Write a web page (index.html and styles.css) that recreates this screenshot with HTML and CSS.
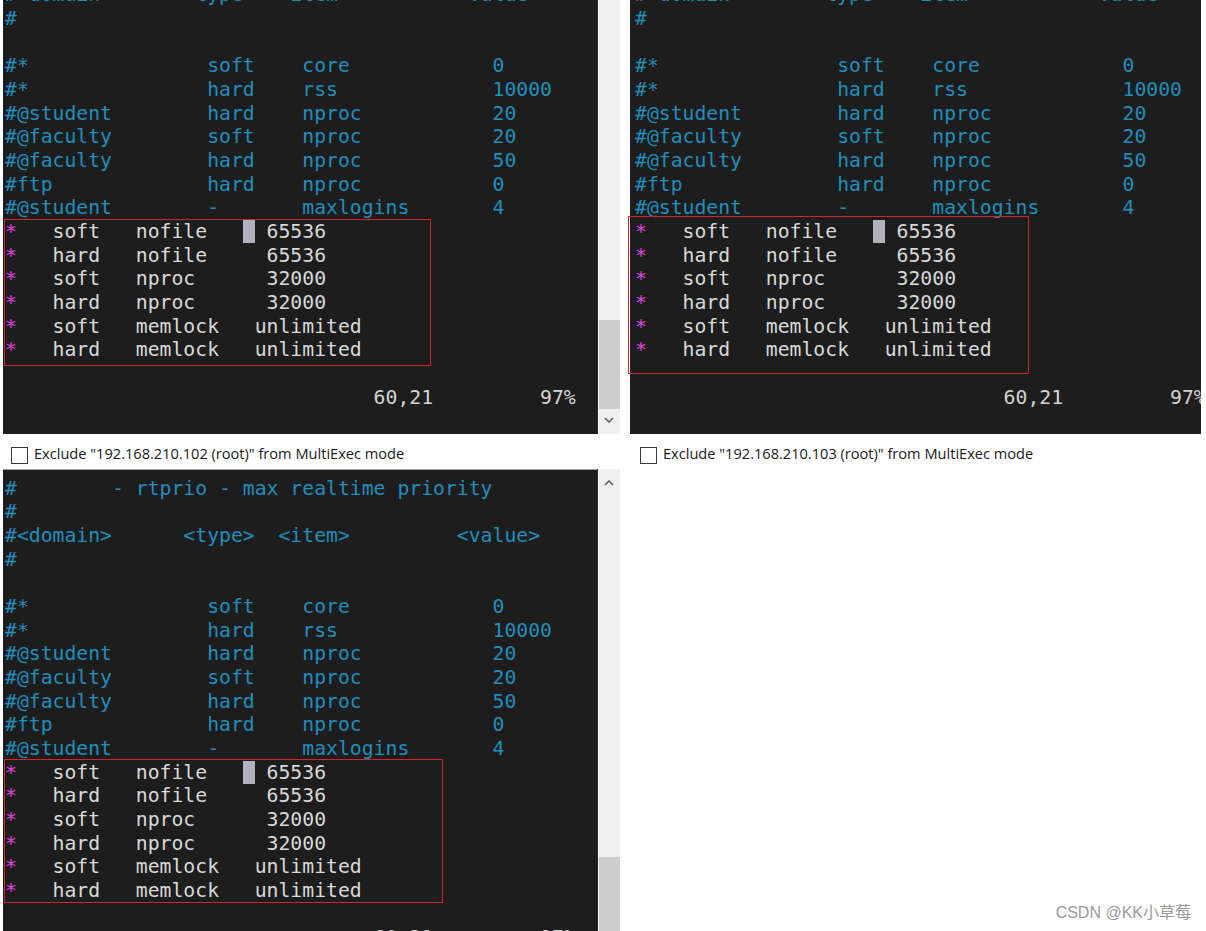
FILE: index.html
```html
<!DOCTYPE html>
<html lang="zh">
<head>
<meta charset="utf-8">
<title>MultiExec</title>
<link rel="stylesheet" href="styles.css">
</head>
<body>
<div class="screen">
  <div class="pane">
    <div class="term term-top">
<pre class="text"><span class="c">#&lt;domain&gt;      &lt;type&gt;  &lt;item&gt;         &lt;value&gt;</span>
<span class="c">#</span>

<span class="c">#*               soft    core            0</span>
<span class="c">#*               hard    rss             10000</span>
<span class="c">#@student        hard    nproc           20</span>
<span class="c">#@faculty        soft    nproc           20</span>
<span class="c">#@faculty        hard    nproc           50</span>
<span class="c">#ftp             hard    nproc           0</span>
<span class="c">#@student        -       maxlogins       4</span>
<span class="m">*</span>   soft   nofile   <span class="cur"> </span> 65536
<span class="m">*</span>   hard   nofile     65536
<span class="m">*</span>   soft   nproc      32000
<span class="m">*</span>   hard   nproc      32000
<span class="m">*</span>   soft   memlock   unlimited
<span class="m">*</span>   hard   memlock   unlimited

<span class="s">                               60,21         97%</span>
</pre>
      <div class="mark mark-tl"></div>
    </div>
    <div class="scrollbar">
      <div class="track track-top"></div>
      <div class="thumb thumb-top"></div>
      <div class="track track-gap"></div>
      <div class="arrow"><svg width="10" height="6" viewBox="0 0 10 6"><path d="M1 1 L5 5 L9 1" fill="none" stroke="#606060" stroke-width="1.6"/></svg></div>
    </div>
  </div>

  <div class="pane pane-right">
    <div class="term term-top term-r">
<pre class="text"><span class="c">#&lt;domain&gt;      &lt;type&gt;  &lt;item&gt;         &lt;value&gt;</span>
<span class="c">#</span>

<span class="c">#*               soft    core            0</span>
<span class="c">#*               hard    rss             10000</span>
<span class="c">#@student        hard    nproc           20</span>
<span class="c">#@faculty        soft    nproc           20</span>
<span class="c">#@faculty        hard    nproc           50</span>
<span class="c">#ftp             hard    nproc           0</span>
<span class="c">#@student        -       maxlogins       4</span>
<span class="m">*</span>   soft   nofile   <span class="cur"> </span> 65536
<span class="m">*</span>   hard   nofile     65536
<span class="m">*</span>   soft   nproc      32000
<span class="m">*</span>   hard   nproc      32000
<span class="m">*</span>   soft   memlock   unlimited
<span class="m">*</span>   hard   memlock   unlimited

<span class="s">                               60,21         97%</span>
</pre>
    </div>
    <div class="mark mark-tr"></div>
  </div>

  <div class="label label-l">
    <span class="box"></span>
    <span class="label-text">Exclude "192.168.210.102 (root)" from MultiExec mode</span>
  </div>
  <div class="label label-r">
    <span class="box"></span>
    <span class="label-text">Exclude "192.168.210.103 (root)" from MultiExec mode</span>
  </div>

  <div class="pane pane-bottom">
    <div class="term term-bot">
<pre class="text"><span class="c">#        - rtprio - max realtime priority</span>
<span class="c">#</span>
<span class="c">#&lt;domain&gt;      &lt;type&gt;  &lt;item&gt;         &lt;value&gt;</span>
<span class="c">#</span>

<span class="c">#*               soft    core            0</span>
<span class="c">#*               hard    rss             10000</span>
<span class="c">#@student        hard    nproc           20</span>
<span class="c">#@faculty        soft    nproc           20</span>
<span class="c">#@faculty        hard    nproc           50</span>
<span class="c">#ftp             hard    nproc           0</span>
<span class="c">#@student        -       maxlogins       4</span>
<span class="m">*</span>   soft   nofile   <span class="cur"> </span> 65536
<span class="m">*</span>   hard   nofile     65536
<span class="m">*</span>   soft   nproc      32000
<span class="m">*</span>   hard   nproc      32000
<span class="m">*</span>   soft   memlock   unlimited
<span class="m">*</span>   hard   memlock   unlimited

<span class="s">                               60,21         97%</span>
</pre>
      <div class="mark mark-bl"></div>
    </div>
    <div class="scrollbar scrollbar-bot">
      <div class="arrow arrow-up"><svg width="10" height="6" viewBox="0 0 10 6"><path d="M1 5 L5 1 L9 5" fill="none" stroke="#606060" stroke-width="1.6"/></svg></div>
      <div class="track track-bot"></div>
      <div class="thumb thumb-bot"></div>
    </div>
  </div>

  <div class="blank">
    <span class="watermark">CSDN @KK小草莓</span>
  </div>
</div>
</body>
</html>
```

FILE: styles.css
```css
html, body {
  margin: 0;
  padding: 0;
  background: #ffffff;
}

.screen {
  width: 1206px;
  height: 931px;
  overflow: hidden;
  box-sizing: border-box;
  padding-left: 3px;
  display: grid;
  grid-template-columns: 617px 571px;
  grid-template-rows: 434px 35px 462px;
  column-gap: 10px;
}

.pane {
  display: flex;
  position: relative;
  min-height: 0;
}

.term {
  position: relative;
  background: #1d1d1d;
  width: 594px;
  overflow: hidden;
  box-sizing: border-box;
  padding-left: 2px;
}

.term-r {
  width: 571px;
  padding-left: 5px;
}

.text {
  margin: 0;
  font-family: "DejaVu Sans Mono", monospace;
  font-size: 19.75px;
  line-height: 23.67px;
  color: #d9d9d9;
  white-space: pre;
}

.term-top .text {
  margin-top: -16.6px;
}

.term-bot {
  border-top: 1px solid #a0a0a0;
  padding-top: 6.6px;
}

.c { color: #1f8fbd; }
.m { color: #e43fe8; }
.s { color: #d4d4d4; }
.cur {
  background: #b3b3bf;
}

.mark {
  position: absolute;
  border: 1px solid #d3242c;
  pointer-events: none;
}

.mark-tl {
  left: 1px;
  top: 219px;
  width: 425px;
  height: 145px;
}

.mark-tr {
  left: -2px;
  top: 216px;
  width: 399px;
  height: 156px;
}

.mark-bl {
  left: 1px;
  top: 289px;
  width: 437px;
  height: 142px;
}

.scrollbar {
  width: 23px;
  background: #f0f0f0;
  display: flex;
  flex-direction: column;
  align-items: center;
  border-left: 1px solid #2a2a2a;
  box-sizing: border-box;
}

.track-top { height: 320px; }
.thumb { width: 21px; background: #cdcdcd; }
.thumb-top { height: 89px; }
.track-gap { flex: 1; }

.arrow {
  height: 25px;
  display: flex;
  align-items: center;
  justify-content: center;
  padding-bottom: 3px;
  box-sizing: border-box;
}

.arrow-up {
  height: 26px;
  padding-bottom: 0;
  padding-top: 2px;
}

.track-bot { height: 362px; }
.thumb-bot { flex: 1; }

.label {
  display: flex;
  align-items: center;
  padding-top: 12px;
  height: 18px;
  font-family: "Open Sans", "Liberation Sans", sans-serif;
  font-size: 14.6px;
  color: #1a1a1a;
}

.label-l { padding-left: 8px; }
.label-r { padding-left: 10px; }

.box {
  width: 15px;
  height: 15px;
  border: 1px solid #3a3a3a;
  background: #ffffff;
  margin-right: 6px;
  flex-shrink: 0;
}

.label-text {
  white-space: nowrap;
  letter-spacing: 0;
  position: relative;
  top: -2px;
}

.blank {
  display: flex;
  align-items: flex-end;
  justify-content: flex-end;
  padding: 0 10px 8px 0;
}

.watermark {
  font-family: "Liberation Sans", "Noto Sans CJK SC", sans-serif;
  font-size: 16px;
  color: #9a9a9a;
}
```
